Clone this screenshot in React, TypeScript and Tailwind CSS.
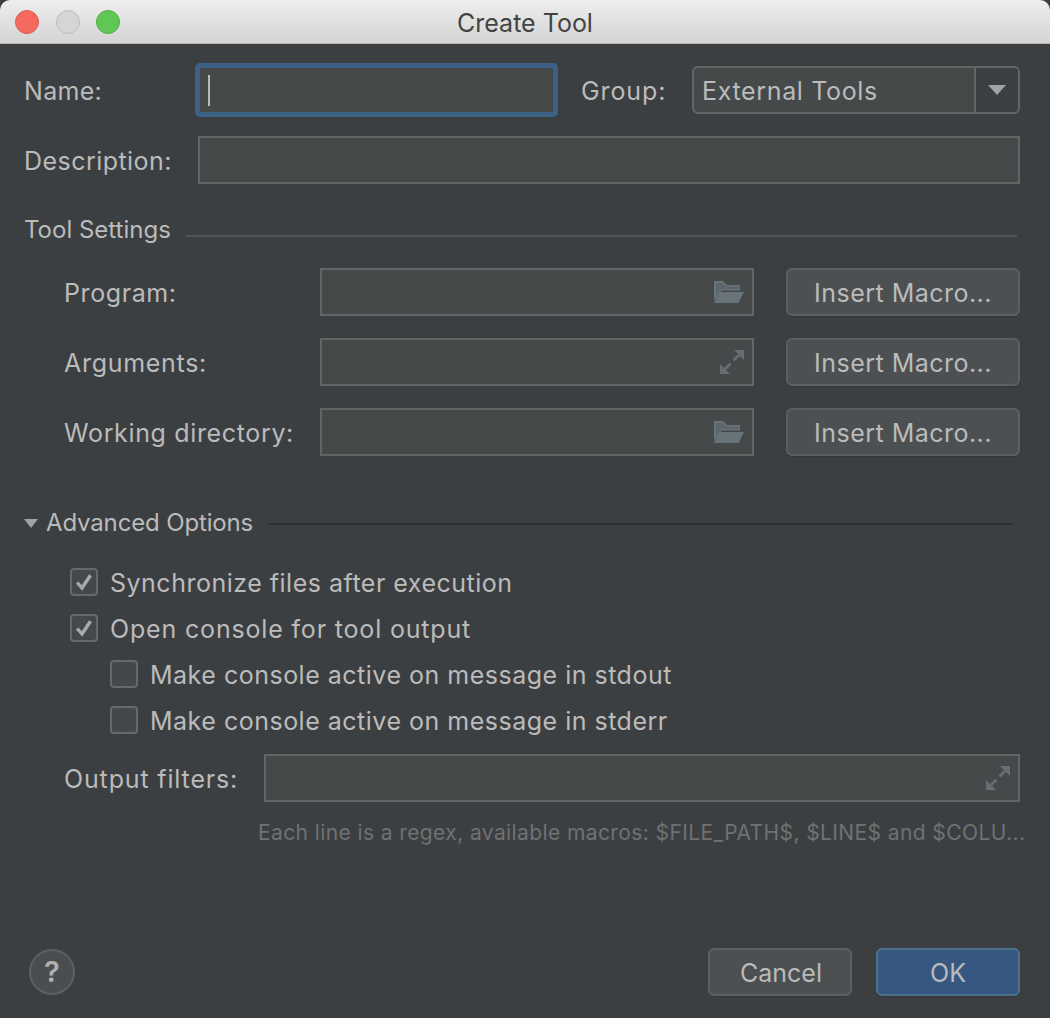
import React from "react";

const label = "text-[#bbbbbb] text-[25px] leading-[30px] whitespace-nowrap pt-[2px]";

function FolderIcon() {
  return (
    <svg width="30" height="22" viewBox="0 0 30 22" className="shrink-0">
      <path d="M0 0 H9 L13 4 H26 V9.5 H7.5 L0 20 Z" fill="#68737a" />
      <path d="M5.5 11 H30 L24.5 22 H0 Z" fill="#68737a" />
      <path d="M2 2 H8.5 L12 5.5 H24.5 V8 H7 L2 15 Z" fill="#5c666b" />
    </svg>
  );
}

function ExpandIcon() {
  return (
    <svg width="24" height="24" viewBox="0 0 24 24" className="shrink-0">
      <path d="M14 0 H24 V10 Z" fill="#646e73" />
      <path d="M19 5 L13.5 10.5" stroke="#646e73" strokeWidth="2.6" fill="none" />
      <path d="M0 14 V24 H10 Z" fill="#646e73" />
      <path d="M5 19 L10.5 13.5" stroke="#646e73" strokeWidth="2.6" fill="none" />
    </svg>
  );
}

function Field({ className = "", icon }: { className?: string; icon?: React.ReactNode }) {
  return (
    <div className={`h-12 bg-[#45494a] border-2 border-[#646464] flex items-center justify-end ${className}`}>
      {icon}
    </div>
  );
}

function Button({ children, className = "" }: { children: React.ReactNode; className?: string }) {
  return (
    <div
      className={`h-12 rounded-[6px] border-2 flex items-center justify-center pt-1 text-[#bbbbbb] text-[25px] shadow-[0_1px_1px_rgba(0,0,0,0.15)] ${className}`}
    >
      {children}
    </div>
  );
}

function MacroRow({ name, icon, top, track }: { name: string; icon: React.ReactNode; top: string; track: string }) {
  return (
    <div className={`flex items-center ${top}`}>
      <div className={`${label} ${track} w-[296px] pl-[40px]`}>{name}</div>
      <Field className="w-[434px] pr-[8px]" icon={icon} />
      <Button className="w-[234px] ml-[32px] bg-[#4c5052] border-[#5e6060] tracking-[0.47px]">Insert Macro...</Button>
    </div>
  );
}

function Check({
  checked,
  text,
  className = "",
  track = "tracking-[0.5px]",
}: {
  checked?: boolean;
  text: string;
  className?: string;
  track?: string;
}) {
  return (
    <div className={`flex items-center h-[28px] ${className}`}>
      <div className="w-[28px] h-[28px] rounded-[4px] border-2 border-[#666869] bg-[#43494a] flex items-center justify-center shrink-0">
        {checked && (
          <svg width="20" height="20" viewBox="0 0 20 20">
            <path d="M3.2 10.5 L8 16 L16.5 3.2" fill="none" stroke="#a9a9a9" strokeWidth="3.4" />
          </svg>
        )}
      </div>
      <span className={`${label} ${track} ml-[12px]`}>{text}</span>
    </div>
  );
}

export default function App() {
  return (
    <div
      className="w-[1050px] h-[1018px] flex flex-col bg-[#3c3f41] overflow-hidden"
      style={{ fontFamily: "Inter, 'Noto Sans', sans-serif" }}
    >
      <div className="h-[44px] shrink-0 relative flex items-center justify-center rounded-t-[10px] bg-gradient-to-b from-[#eeeeee] to-[#d4d4d4] border-b border-[#b8b8b8]">
        <div className="absolute left-[15px] top-[10px] flex gap-[16.5px]">
          <div className="w-6 h-6 rounded-full bg-[#f46a5e] border border-[#dc5b50]" />
          <div className="w-6 h-6 rounded-full bg-[#d5d5d5] border border-[#bdbdbd]" />
          <div className="w-6 h-6 rounded-full bg-[#60c755] border border-[#52ad47]" />
        </div>
        <span className="text-[#434343] text-[25px] pt-1">Create Tool</span>
      </div>

      <div className="flex-1 flex flex-col pl-[24px] pr-[30px]">
        <div className="flex items-center mt-[22px]">
          <div className={`${label} tracking-[0.3px] w-[174px]`}>Name:</div>
          <div className="w-[357px] h-12 bg-[#45494a] border-2 border-[#3d6185] rounded-[2px] shadow-[0_0_0_3px_#3d6185] flex items-center pl-[8px]">
            <div className="w-[2px] h-[31px] bg-[#bbbbbb]" />
          </div>
          <div className={`${label} tracking-[0.9px] ml-[26px] w-[111px]`}>Group:</div>
          <div className="w-[328px] h-12 bg-[#45494a] border-2 border-[#646464] rounded-[6px] flex items-center">
            <span className="flex-1 pl-[8px] pt-1 text-[#bbbbbb] text-[25px] tracking-[0.65px]">External Tools</span>
            <div className="w-[44px] h-full border-l-2 border-[#646464] bg-[#3c3f41] rounded-r-[4px] flex items-center justify-center">
              <div className="w-0 h-0 border-l-[9px] border-r-[9px] border-t-[10px] border-l-transparent border-r-transparent border-t-[#a0a2a4]" />
            </div>
          </div>
        </div>

        <div className="flex items-center mt-[22px]">
          <div className={`${label} tracking-[0.45px] w-[174px]`}>Description:</div>
          <Field className="flex-1" />
        </div>

        <div className="flex items-center mt-[31px] h-[30px]">
          <span className="text-[#bbbbbb] text-[24px] leading-[30px] whitespace-nowrap">Tool Settings</span>
          <div className="flex-1 h-[2px] bg-[#515355] ml-[15px] mr-[3px] mt-[12px]" />
        </div>

        <MacroRow name="Program:" icon={<FolderIcon />} top="mt-[23px]" track="tracking-[0.6px]" />
        <MacroRow name="Arguments:" icon={<ExpandIcon />} top="mt-[22px]" track="tracking-[0.7px]" />
        <MacroRow name="Working directory:" icon={<FolderIcon />} top="mt-[22px]" track="tracking-[0.65px]" />

        <div className="flex items-center mt-[52px] h-[30px]">
          <div className="w-0 h-0 border-l-[7px] border-r-[7px] border-t-[9px] border-l-transparent border-r-transparent border-t-[#a0a2a4]" />
          <span className="text-[#bbbbbb] text-[24px] leading-[30px] whitespace-nowrap ml-[8px] tracking-[-0.15px]">Advanced Options</span>
          <div className="flex-1 h-[2px] bg-[#2e3031] ml-[16px] mr-[7px] mt-[2px]" />
        </div>

        <Check checked text="Synchronize files after execution" className="mt-[30px] ml-[46px]" />
        <Check checked text="Open console for tool output" className="mt-[18px] ml-[46px]" track="tracking-[0.83px]" />
        <Check text="Make console active on message in stdout" className="mt-[18px] ml-[86px]" />
        <Check text="Make console active on message in stderr" className="mt-[18px] ml-[86px]" />

        <div className="flex items-center mt-[20px]">
          <div className={`${label} tracking-[0.85px] w-[240px] pl-[40px]`}>Output filters:</div>
          <Field className="flex-1 pr-[8px]" icon={<ExpandIcon />} />
        </div>

        <div className="mt-[18px] ml-[234px] text-[#6f7173] text-[21px] leading-[26px] whitespace-nowrap tracking-[0.4px]">
          Each line is a regex, available macros: $FILE_PATH$, $LINE$ and $COLU...
        </div>

        <div className="flex-1" />

        <div className="flex items-center mb-[22px]">
          <div className="ml-[5px] w-[46px] h-[46px] rounded-full bg-[#4a4e50] border-2 border-[#5e6060] flex items-center justify-center text-[#b0b0b0] text-[29px] font-semibold">
            ?
          </div>
          <div className="flex-1" />
          <Button className="w-[144px] bg-[#4c5052] border-[#5e6060] pl-[2px]">Cancel</Button>
          <Button className="w-[144px] ml-[24px] bg-[#365880] border-[#4c708c]">OK</Button>
        </div>
      </div>
    </div>
  );
}
